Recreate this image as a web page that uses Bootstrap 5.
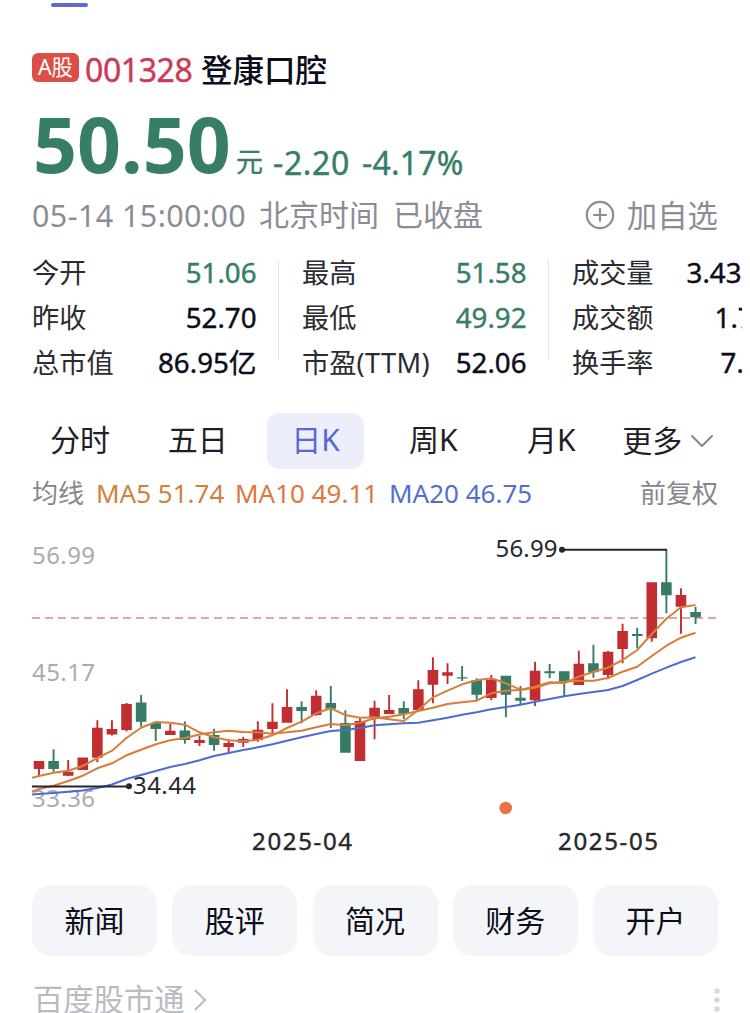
<!DOCTYPE html>
<html lang="zh-CN">
<head>
<meta charset="utf-8">
<meta name="viewport" content="width=device-width, initial-scale=1">
<title>登康口腔 001328</title>
<link href="https://cdn.jsdelivr.net/npm/bootstrap@5.3.0/dist/css/bootstrap.min.css" rel="stylesheet">
<style>
body{font-family:"Noto Sans","Noto Sans CJK SC",sans-serif;color:#1f2024;background:#fff;width:750px;height:1013px;overflow:hidden;white-space:nowrap}
.page{padding-left:32px;padding-right:32px}
.top-line{width:37px;height:4px;margin:3px 0 0 51px;border-radius:2px;background:#5b6bd5}
.title-row{height:36px;margin-top:45px;line-height:36px}
.tag{width:47px;height:29px;line-height:28px;border-radius:6px;background:#dc4f46;color:#fff;font-size:21.5px;margin-top:-5px}
.code{font-size:32px;color:#cb3a56;margin-left:6px;width:116px;letter-spacing:-.4px;-webkit-text-stroke:.4px}
.stock{font-size:31.5px;font-weight:500;color:#0b0d1a}
.green{color:#377d67!important}
.price-row{height:78px;margin-top:17px}
.price{font-size:77px;font-weight:700;line-height:78px;width:204px;padding-left:1px}
.unit{font-size:27px;line-height:30px;width:37px;margin-bottom:6px;-webkit-text-stroke:.3px}
.chg{font-size:32px;line-height:40px;-webkit-text-stroke:.4px}
.time-row{height:40px;line-height:40px;margin-top:12px;color:#8b8d95;font-size:30px}
.quotes{height:135px;margin-top:15px;width:710px;overflow:hidden;font-size:27.2px;line-height:45px;color:#2b2c31}
.quote-col{width:224.5px;flex:none}
.quote-col b{font-weight:400;font-size:27.7px;color:#0b0d1a;-webkit-text-stroke:.4px}
.rule{width:1px;height:100px;background:#e3e4e8;flex:none;margin:10px 23.3px 0 21.2px}
.periods{height:56px;margin:28px 0 0 -1px;gap:20px}
.periods .nav-link{width:98px;height:56px;line-height:54px;padding:0;font-size:30px;color:#1f2024;border-radius:12px;text-align:center}
.periods .nav-link.active{background:#eceefb;color:#5767d4;border-radius:12px}
.ma-row{height:34px;line-height:34px;margin-top:7px;font-size:26px}
.gray{color:#85878d}
.chart{display:block;margin-top:27px}
.links{margin-top:25px;gap:15.3px}
.links .btn{height:71px;border-radius:19px;background:#f4f5f9;border:0;font-size:30px;line-height:67px;padding:0;color:#0b0d1a;flex:1 1 0}
.foot{height:40px;line-height:40px;margin-top:24px;font-size:30.3px;color:#b9bbc1}
</style>
</head>
<body>
<div class="top-line"></div>
<main>
<div class="page">
  <div class="title-row d-flex align-items-center">
    <span class="tag text-center">A股</span><span class="code">001328</span><span class="stock">登康口腔</span>
  </div>
  <div class="price-row d-flex align-items-end green">
    <span class="price">50.50</span><span class="unit">元</span><span class="chg" style="letter-spacing:.6px;width:89px">-2.20</span><span class="chg" style="letter-spacing:.2px">-4.17%</span>
  </div>
  <div class="time-row d-flex">
    <span style="width:227px;letter-spacing:.4px;font-size:30.5px">05-14 15:00:00</span><span style="width:134px">北京时间</span><span>已收盘</span>
    <span class="ms-auto d-flex align-items-center">
      <svg width="30" height="30" viewBox="0 0 30 30" fill="none" stroke="#8b8d95" stroke-width="2.2" class="me-2 flex-shrink-0"><circle cx="15" cy="15" r="13.2"/><path d="M8.2 15h13.6M15 8.2v13.6"/></svg><span style="margin-left:4px;margin-top:2px;font-size:30.4px">加自选</span>
    </span>
  </div>
  <div class="quotes d-flex">
    <div class="quote-col">
      <div class="d-flex justify-content-between"><span>今开</span><b class="green">51.06</b></div>
      <div class="d-flex justify-content-between"><span>昨收</span><b>52.70</b></div>
      <div class="d-flex justify-content-between"><span>总市值</span><b>86.95亿</b></div>
    </div>
    <div class="rule"></div>
    <div class="quote-col">
      <div class="d-flex justify-content-between"><span>最高</span><b class="green">51.58</b></div>
      <div class="d-flex justify-content-between"><span>最低</span><b class="green">49.92</b></div>
      <div class="d-flex justify-content-between"><span>市盈<span style="letter-spacing:.4px">(TTM)</span></span><b>52.06</b></div>
    </div>
    <div class="rule"></div>
    <div class="quote-col">
      <div class="d-flex"><span>成交量</span><b style="margin-left:33px">3.43</b></div>
      <div class="d-flex"><span>成交额</span><b style="margin-left:61px">1.7</b></div>
      <div class="d-flex"><span>换手率</span><b style="margin-left:67px">7.</b></div>
    </div>
  </div>
  <nav class="nav nav-pills flex-nowrap periods">
    <a class="nav-link">分时</a><a class="nav-link">五日</a><a class="nav-link active">日K</a><a class="nav-link">周K</a><a class="nav-link">月K</a>
    <a class="nav-link d-flex align-items-center"><span style="margin:-1px 0 0 2px">更多</span><svg width="24" height="16" viewBox="0 0 24 16" fill="none" stroke="#85878d" stroke-width="2" stroke-linecap="round" stroke-linejoin="round" style="margin-left:8px"><path d="M2 3l10 10L22 3"/></svg></a>
  </nav>
  <div class="ma-row d-flex">
    <span class="gray" style="width:64px">均线</span>
    <span style="width:139px;color:#d2803c">MA5 51.74</span>
    <span style="width:154px;color:#dc7840">MA10 49.11</span>
    <span style="color:#536fd0">MA20 46.75</span>
    <span class="gray ms-auto">前复权</span>
  </div>
</div>
<svg class="chart" width="750" height="323" viewBox="0 537 750 323" fill="none" font-size="24">
  <g fill="#a9abb1">
    <text x="32" y="564" textLength="63">56.99</text>
    <text x="32" y="681" textLength="63">45.17</text>
    <text x="32" y="806.5" textLength="63">33.36</text>
  </g>
  <path d="M32 618H716" stroke="#eaa3a3" stroke-width="2" stroke-dasharray="8 5"/>
  <g id="candles"></g>
  <g id="averages" stroke-width="2" stroke-linejoin="round"></g>
  <path d="M32 786.5H129M562 549.7H667" stroke="#26272b" stroke-width="2"/>
  <g fill="#26272b">
    <circle cx="129" cy="786.3" r="3"/><circle cx="562" cy="549.7" r="3"/>
    <text x="133" y="793.5" textLength="63">34.44</text>
    <text x="495.5" y="556.5" textLength="62">56.99</text>
    <g stroke="#26272b" stroke-width=".4">
      <text x="252" y="850" textLength="100">2025-04</text>
      <text x="558" y="850" textLength="100">2025-05</text>
    </g>
  </g>
  <circle cx="505.7" cy="808" r="6.3" fill="#e97144"/>
</svg>
<div class="page">
  <div class="links d-flex">
    <button class="btn">新闻</button><button class="btn">股评</button><button class="btn">简况</button><button class="btn">财务</button><button class="btn">开户</button>
  </div>
  <div class="foot d-flex align-items-center">
    <span style="margin-left:1px">百度股市通</span>
    <svg width="14" height="24" viewBox="0 0 14 24" fill="none" stroke="#b9bbc1" stroke-width="2" style="margin-left:9px"><path d="M2 2l10 10L2 22"/></svg>
    <svg class="ms-auto" width="6" height="26" viewBox="0 0 6 26" fill="#d7d8db" style="margin-right:-1.5px"><circle cx="3" cy="4" r="2.7"/><circle cx="3" cy="13" r="2.7"/><circle cx="3" cy="22" r="2.7"/></svg>
  </div>
</div>
</main>
<script src="https://cdn.jsdelivr.net/npm/bootstrap@5.3.0/dist/js/bootstrap.bundle.min.js"></script>
<script>
// Each candle: direction, body top, body bottom, wick top, wick bottom
const candles=[
['r',761,769,761,776.7],['g',761,769,749.3,771.7],['r',771.7,775.7,760,776],['r',757.5,770,757.5,770],['r',727.7,757.7,720.3,762.3],
['r',729,734.5,720.3,735.6],['r',704,730,703,731.5],['g',702.5,721.7,695,726.7],['g',723,729,722,741],['r',730.7,735,724,735],
['g',730.5,740,721.5,743.7],['r',740,743,736,746],['g',735,745,728.7,750.7],['r',743,747,739,752],['r',739,742.7,737,747],
['r',729.7,740,721.3,741.7],['r',721.7,729,703.3,733.3],['r',707,722.7,689.3,722.7],['g',707,711,701.3,723.3],['r',695.7,715,690.3,715.7],
['g',703,708.7,686,728],['g',723,752.7,710.3,752.7],['r',721,761,718,761],['r',707.7,717.7,700.7,739.3],['r',710,714,695,714],
['g',708,713.7,701.3,719],['r',689.3,710,680.3,711],['r',670,684.7,657.3,703.3],['r',672.3,675.7,663.3,684],['g',677.2,678.4,666,681],
['g',680,694.7,678.3,700],['r',679.7,698,675,700.3],['g',675.7,694.7,675.7,717.3],['g',697.7,700.7,686,704],['r',670.7,700.3,661.7,706],
['g',671.3,673.2,664,678.3],['g',671.3,681.7,671.3,696],['r',663.7,685,650.7,685],['g',663.3,672.3,644.7,677.7],['r',651.7,675,651,679.3],
['r',631,649,623.7,663.3],['g',634,636,627.7,648.3],['r',582.3,638.3,582.3,641.7],['g',582.3,595.3,549.7,613.3],['r',595,606.7,588.3,633.7],
['g',612,617.3,606.7,624]];
// Moving averages: colour, value at the left edge, then one value per candle
const averages=[
['#4d6bd0',794.5,794,793,791.8,790.5,788,784.5,779,775,771,767,764,760.3,756,753,750,747.3,744.3,740.7,737.3,734,731,730,728,725.3,724.3,723.3,722.7,720.3,717.7,714.7,712.3,709.3,707,704.7,701.7,699,696.3,694,692,690,686,680,673.7,667.7,662,657.3],
['#db7b39',791.7,789,785.7,781,775.7,768.3,763.3,755.3,749.7,744.3,740.3,738,734.5,732.3,730.7,732,732.3,733.7,732.3,730.7,727.3,724,725.3,722.7,718.3,716.7,714.3,711,707.7,704,702.3,700.7,693.3,690.7,690,687.7,683.3,681.7,680.7,680.7,678,671.7,666.7,656,645.7,637.7,632.7],
['#d5803b',777.7,776,772.7,770.7,766,758,750.7,738,727.7,722,722.7,724.7,732.3,737.3,740.3,741.3,739.7,735.3,728,721.7,713.3,708.3,715,717.7,717.3,719.3,721,710,697.3,690.7,684.3,680.3,678.3,683.3,689.7,686.7,682.3,683.3,676.7,671.7,667.7,660,650,634,618.7,607.3,605]];
const xAt=i=>39+i*14.59;
document.getElementById('candles').innerHTML=candles.map(([d,t,b,h,l],i)=>{
  const x=xAt(i),c=d==='r'?'#c22d31':'#357b65';
  return `<path fill="${c}" d="M${x-5.3} ${t}h10.6V${b}h-10.6zM${x-.95} ${h}h1.9V${l}h-1.9z"/>`;
}).join('');
document.getElementById('averages').innerHTML=averages.map(([c,first,...v])=>
  `<polyline stroke="${c}" points="32,${first} ${v.map((y,i)=>xAt(i).toFixed(1)+','+y).join(' ')}"/>`).join('');
</script>
</body>
</html>
